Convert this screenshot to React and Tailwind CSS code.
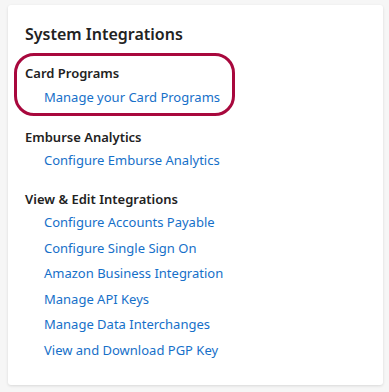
export default function App() {
  const links = [
    'Configure Accounts Payable',
    'Configure Single Sign On',
    'Amazon Business Integration',
    'Manage API Keys',
    'Manage Data Interchanges',
    'View and Download PGP Key',
  ];

  return (
    <div className="w-[389px] h-[392px] bg-[#f6f6f6] pt-[5px] pl-[8px]" style={{ fontFamily: '"Noto Sans", sans-serif' }}>
      <div className="w-[375px] h-[380px] bg-white rounded-[3px] shadow-[0_1px_3px_rgba(0,0,0,0.12)] pl-[17px] pt-[17px] whitespace-nowrap">
        <h2 className="text-[16px] leading-[24px] font-semibold text-[#222]">System Integrations</h2>

        <div className="mt-[7px] -ml-[11px] w-[221px] h-[63px] border-[3px] border-[#a8083d] rounded-[20px] pl-[8px] pt-[7px]">
          <p className="text-[13px] leading-[20px] font-semibold text-[#222]">Card Programs</p>
          <a className="block ml-[19px] mt-[4px] text-[13px] leading-[20px] text-[#1670c9]">Manage your Card Programs</a>
        </div>

        <p className="mt-[11px] text-[13px] leading-[20px] font-semibold text-[#222]">Emburse Analytics</p>
        <a className="block ml-[19px] mt-[3px] text-[13px] leading-[20px] text-[#1670c9]">Configure Emburse Analytics</a>

        <p className="mt-[19px] text-[13px] leading-[20px] font-semibold text-[#222]">View &amp; Edit Integrations</p>
        <div className="ml-[19px] mt-[3px] flex flex-col gap-[5.6px]">
          {links.map((l) => (
            <a key={l} className="block text-[13px] leading-[20px] text-[#1670c9]">{l}</a>
          ))}
        </div>
      </div>
    </div>
  );
}
